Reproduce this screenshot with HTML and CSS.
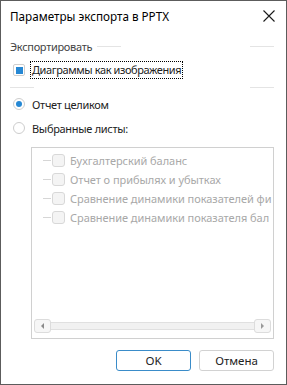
FILE: index.html
```html
<!DOCTYPE html>
<html lang="ru">
<head>
    <meta charset="UTF-8">
    <title>Параметры экспорта в PPTX</title>
    <link rel="stylesheet" href="styles.css">
</head>
<body>
    <div class="dialog">
        <div class="titlebar">
            <span class="title">Параметры экспорта в PPTX</span>
            <svg class="close" width="12" height="12" viewBox="0 0 12 12">
                <path d="M0.5 0.5 L11.5 11.5 M11.5 0.5 L0.5 11.5" stroke="#1a1a1a" stroke-width="1.1" fill="none"/>
            </svg>
        </div>

        <div class="content">
            <div class="group-head">
                <span class="group-title">Экспортировать</span>
                <i class="rule"></i>
                <i class="spacer"></i>
                <i class="rule"></i>
            </div>

            <div class="check-row">
                <span class="checkbox"><span class="mark"></span></span>
                <span class="label focused">Диаграммы как изображения</span>
            </div>

            <div class="group-foot">
                <i class="rule"></i>
                <i class="spacer"></i>
                <i class="rule"></i>
            </div>

            <div class="radio-row first">
                <span class="radio checked"></span>
                <span class="label">Отчет целиком</span>
            </div>
            <div class="radio-row">
                <span class="radio"></span>
                <span class="label">Выбранные листы:</span>
            </div>

            <div class="listbox">
                <div class="items">
                    <div class="item"><i class="dash"></i><span class="item-box"></span><span class="item-text">Бухгалтерский баланс</span></div>
                    <div class="item"><i class="dash"></i><span class="item-box"></span><span class="item-text">Отчет о прибылях и убытках</span></div>
                    <div class="item"><i class="dash"></i><span class="item-box"></span><span class="item-text">Сравнение динамики показателей фи</span></div>
                    <div class="item"><i class="dash"></i><span class="item-box"></span><span class="item-text">Сравнение динамики показателя бал</span></div>
                </div>
                <div class="hscroll">
                    <span class="scroll-btn left"><i class="arrow-left"></i></span>
                    <span class="track"></span>
                    <span class="scroll-btn right"><i class="arrow-right"></i></span>
                </div>
            </div>

            <div class="buttons">
                <button class="btn default">OK</button>
                <button class="btn">Отмена</button>
            </div>
        </div>
    </div>
</body>
</html>
```

FILE: styles.css
```css
html, body {
    margin: 0;
    padding: 0;
    background: #fff;
}

body {
    font-family: "Noto Sans", "Open Sans", sans-serif;
    font-size: 11px;
    letter-spacing: -0.3px;
    color: #222;
}

.dialog {
    box-sizing: border-box;
    width: 287px;
    height: 385px;
    border: 1px solid #5c5c5c;
    background: #fff;
    display: flex;
    flex-direction: column;
}

.titlebar {
    height: 29px;
    display: flex;
    align-items: center;
    padding: 0 11px 0 9px;
}

.title {
    flex: 1;
    font-size: 11.7px;
    letter-spacing: 0;
    color: #000;
    white-space: nowrap;
}

.close {
    display: block;
    margin-top: 1px;
}

.content {
    padding: 0 12px 0 9px;
    display: flex;
    flex-direction: column;
}

.group-head {
    margin-top: 8px;
    height: 16px;
    display: flex;
    align-items: center;
}

.group-title {
    color: #444;
    margin-right: 5px;
    white-space: nowrap;
}

.rule {
    width: 24px;
    height: 1px;
    background: #e4e4e4;
}

.spacer {
    flex: 1;
}

.check-row {
    margin-top: 7px;
    height: 18px;
    display: flex;
    align-items: center;
}

.checkbox {
    box-sizing: border-box;
    width: 12px;
    height: 12px;
    margin-left: 3px;
    border: 1px solid #cfcfcf;
    border-radius: 2px;
    display: flex;
    align-items: center;
    justify-content: center;
}

.mark {
    width: 7px;
    height: 7px;
    background: #2688d4;
}

.label {
    margin-left: 7px;
    white-space: nowrap;
}

.label.focused {
    margin-left: 6px;
    padding: 0 1px;
    outline: 1px dotted #000;
    outline-offset: 0;
    line-height: 16px;
    letter-spacing: -0.4px;
}

.group-foot {
    margin-top: 8px;
    height: 1px;
    display: flex;
}

.radio-row {
    margin-top: 6px;
    height: 18px;
    display: flex;
    align-items: center;
}

.radio-row.first {
    margin-top: 7px;
}

.radio {
    box-sizing: border-box;
    width: 12px;
    height: 12px;
    margin-left: 3px;
    border: 1px solid #cdcdcd;
    border-radius: 50%;
    display: flex;
    align-items: center;
    justify-content: center;
}

.radio.checked::after {
    content: "";
    width: 6px;
    height: 6px;
    border-radius: 50%;
    background: #2688d4;
}

.listbox {
    box-sizing: border-box;
    margin: 10px 0 0 21px;
    height: 192px;
    border: 1px solid #d0d0d0;
    display: flex;
    flex-direction: column;
    overflow: hidden;
}

.items {
    flex: 1;
    padding-top: 3px;
    overflow: hidden;
}

.item {
    height: 19px;
    display: flex;
    align-items: center;
    white-space: nowrap;
    overflow: hidden;
}

.dash {
    flex: none;
    width: 8px;
    height: 1px;
    margin-left: 11px;
    background: #d6d6d6;
}

.item-box {
    box-sizing: border-box;
    flex: none;
    width: 13px;
    height: 13px;
    margin-left: 1px;
    border: 1px solid #d8d8d8;
    border-radius: 3px;
    background: #f4f4f4;
}

.item-text {
    flex: none;
    margin-left: 5px;
    letter-spacing: -0.05px;
    color: #a8a8a8;
}

.hscroll {
    height: 14px;
    margin: 0 2px 5px 2px;
    display: flex;
    align-items: center;
}

.scroll-btn {
    box-sizing: border-box;
    width: 17px;
    height: 14px;
    border: 1px solid #dcdcdc;
    border-radius: 3px;
    background: #f6f6f6;
    display: flex;
    align-items: center;
    justify-content: center;
}

.track {
    flex: 1;
    height: 6px;
    border-top: 1px solid #e0e0e0;
    border-bottom: 1px solid #e0e0e0;
    background: #f1f1f1;
}

.arrow-left {
    width: 0;
    height: 0;
    border-top: 3px solid transparent;
    border-bottom: 3px solid transparent;
    border-right: 3px solid #8a8a8a;
}

.arrow-right {
    width: 0;
    height: 0;
    border-top: 3px solid transparent;
    border-bottom: 3px solid transparent;
    border-left: 3px solid #9a9a9a;
}

.buttons {
    margin-top: 11px;
    display: flex;
    justify-content: flex-end;
    gap: 8px;
}

.btn {
    box-sizing: border-box;
    width: 75px;
    height: 21px;
    padding: 0;
    font-family: inherit;
    font-size: 11.5px;
    color: #222;
    background: #fff;
    border: 1px solid #d2d2d2;
    border-radius: 3px;
}

.btn.default {
    border-color: #3a8cc9;
}
```
